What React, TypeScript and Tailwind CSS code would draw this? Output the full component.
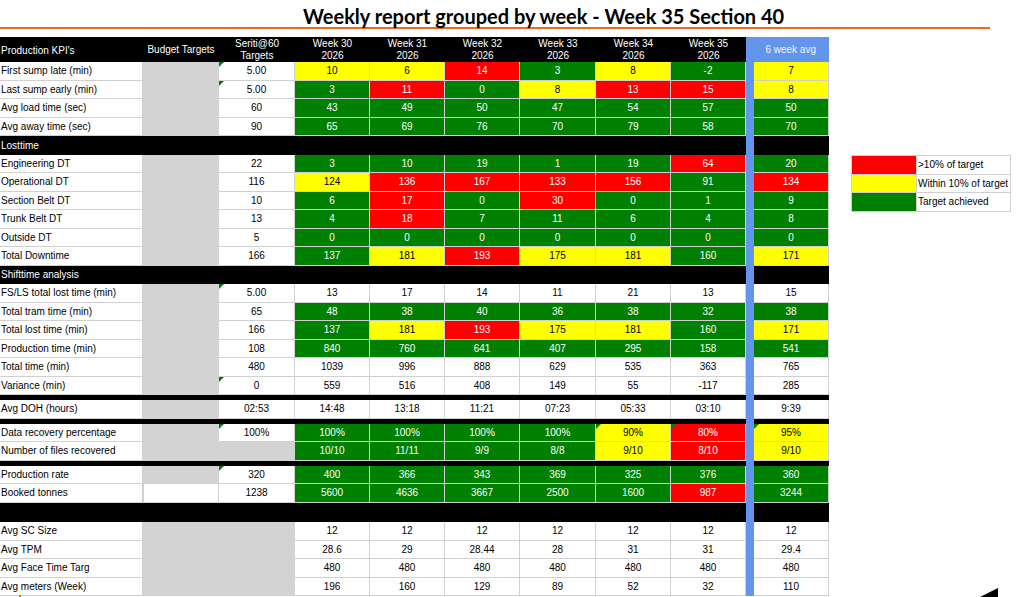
import React from 'react';

type Tone = 'g' | 'r' | 'y' | 'w';

type Row =
  | { kind: 'data'; label: string; target?: string; tri?: boolean; budget?: 'gray' | 'white' | 'span'; cells: string }
  | { kind: 'section'; label: string }
  | { kind: 'sep' }
  | { kind: 'band' };

const GRID = 'grid grid-cols-[143px_76px_76px_75px_75px_75px_76px_75px_75px_8px_75px]';
const FONT = "font-['Liberation_Sans',Arial,sans-serif]";
const LINE = 'border-r border-b border-[#d0d0d0]';

const TONES: Record<Tone, string> = {
  g: 'bg-[#008000] text-white',
  r: 'bg-[#ff0000] text-white',
  y: 'bg-[#ffff00] text-black',
  w: 'bg-white text-black',
};

const rows: Row[] = [
  { kind: 'data', label: 'First sump late (min)', target: '5.00', tri: true, cells: '10|y 6|y 14|r 3|g 8|y -2|g 7|y' },
  { kind: 'data', label: 'Last sump early (min)', target: '5.00', tri: true, cells: '3|g 11|r 0|g 8|y 13|r 15|r 8|y' },
  { kind: 'data', label: 'Avg load time (sec)', target: '60', cells: '43|g 49|g 50|g 47|g 54|g 57|g 50|g' },
  { kind: 'data', label: 'Avg away time (sec)', target: '90', cells: '65|g 69|g 76|g 70|g 79|g 58|g 70|g' },
  { kind: 'section', label: 'Losttime' },
  { kind: 'data', label: 'Engineering DT', target: '22', cells: '3|g 10|g 19|g 1|g 19|g 64|r 20|g' },
  { kind: 'data', label: 'Operational DT', target: '116', cells: '124|y 136|r 167|r 133|r 156|r 91|g 134|r' },
  { kind: 'data', label: 'Section Belt DT', target: '10', cells: '6|g 17|r 0|g 30|r 0|g 1|g 9|g' },
  { kind: 'data', label: 'Trunk Belt DT', target: '13', cells: '4|g 18|r 7|g 11|g 6|g 4|g 8|g' },
  { kind: 'data', label: 'Outside DT', target: '5', cells: '0|g 0|g 0|g 0|g 0|g 0|g 0|g' },
  { kind: 'data', label: 'Total Downtime', target: '166', cells: '137|g 181|y 193|r 175|y 181|y 160|g 171|y' },
  { kind: 'section', label: 'Shifttime analysis' },
  { kind: 'data', label: 'FS/LS total lost time (min)', target: '5.00', tri: true, cells: '13|w 17|w 14|w 11|w 21|w 13|w 15|w' },
  { kind: 'data', label: 'Total tram time (min)', target: '65', cells: '48|g 38|g 40|g 36|g 38|g 32|g 38|g' },
  { kind: 'data', label: 'Total lost time (min)', target: '166', cells: '137|g 181|y 193|r 175|y 181|y 160|g 171|y' },
  { kind: 'data', label: 'Production time (min)', target: '108', cells: '840|g 760|g 641|g 407|g 295|g 158|g 541|g' },
  { kind: 'data', label: 'Total time (min)', target: '480', cells: '1039|w 996|w 888|w 629|w 535|w 363|w 765|w' },
  { kind: 'data', label: 'Variance (min)', target: '0', tri: true, cells: '559|w 516|w 408|w 149|w 55|w -117|w 285|w' },
  { kind: 'sep' },
  { kind: 'data', label: 'Avg DOH (hours)', target: '02:53', cells: '14:48|w 13:18|w 11:21|w 07:23|w 05:33|w 03:10|w 9:39|w' },
  { kind: 'sep' },
  { kind: 'data', label: 'Data recovery percentage', target: '100%', tri: true, cells: '100%|g 100%|g 100%|g 100%|g 90%|y* 80%|r* 95%|y*' },
  { kind: 'data', label: 'Number of files recovered', budget: 'span', cells: '10/10|g 11/11|g 9/9|g 8/8|g 9/10|y 8/10|r 9/10|y' },
  { kind: 'sep' },
  { kind: 'data', label: 'Production rate', target: '320', tri: true, cells: '400|g 366|g 343|g 369|g 325|g 376|g 360|g' },
  { kind: 'data', label: 'Booked tonnes', target: '1238', budget: 'white', cells: '5600|g 4636|g 3667|g 2500|g 1600|g 987|r 3244|g' },
  { kind: 'band' },
  { kind: 'data', label: 'Avg SC Size', budget: 'span', cells: '12|w 12|w 12|w 12|w 12|w 12|w 12|w' },
  { kind: 'data', label: 'Avg TPM', budget: 'span', cells: '28.6|w 29|w 28.44|w 28|w 31|w 31|w 29.4|w' },
  { kind: 'data', label: 'Avg Face Time Targ', budget: 'span', cells: '480|w 480|w 480|w 480|w 480|w 480|w 480|w' },
  { kind: 'data', label: 'Avg meters (Week)', budget: 'span', cells: '196|w 160|w 129|w 89|w 52|w 32|w 110|w' },
];

// little green corner marker, like an Excel cell note
function Flag() {
  return (
    <span className="absolute left-0 top-0 h-0 w-0 border-r-[5px] border-t-[5px] border-r-transparent border-t-[#008000]" />
  );
}

function Cell({ spec }: { spec: string }) {
  const [value, rest] = spec.split('|');
  const tone = rest[0] as Tone;
  return (
    <div className={`relative flex items-center justify-center pt-px ${LINE} ${TONES[tone]}`}>
      {rest.includes('*') && <Flag />}
      {value}
    </div>
  );
}

function TableRow({ row }: { row: Row }) {
  if (row.kind === 'sep') {
    return (
      <div className={`${GRID} h-[5px]`}>
        <div className="col-span-9 bg-black" />
        <div className="bg-[#6495ed]" />
        <div className="bg-black" />
      </div>
    );
  }
  if (row.kind === 'band' || row.kind === 'section') {
    const tall = row.kind === 'band' ? 'h-[19.5px]' : 'h-[18.5px]';
    return (
      <div className={`${GRID} ${tall} text-white`}>
        <div className="col-span-9 flex items-center bg-black pl-px pt-px">{row.kind === 'section' ? row.label : ''}</div>
        <div className="bg-[#6495ed]" />
        <div className="bg-black" />
      </div>
    );
  }
  const cells = row.cells.split(' ');
  return (
    <div className={`${GRID} h-[18.5px]`}>
      <div className={`flex items-center bg-white pl-px pt-px ${LINE}`}>{row.label}</div>
      {row.budget === 'span' ? (
        <div className="col-span-2 bg-[#d3d3d3]" />
      ) : (
        <>
          {row.budget === 'white' ? <div className={`border-l bg-white ${LINE}`} /> : <div className="bg-[#d3d3d3]" />}
          <div className={`relative flex items-center justify-center bg-white pt-px ${LINE}`}>
            {row.tri && <Flag />}
            {row.target}
          </div>
        </>
      )}
      {cells.slice(0, 6).map((c, i) => (
        <Cell key={i} spec={c} />
      ))}
      <div className="bg-[#6495ed]" />
      <Cell spec={cells[6]} />
    </div>
  );
}

function Header() {
  const weeks = ['Week 30', 'Week 31', 'Week 32', 'Week 33', 'Week 34', 'Week 35'];
  return (
    <div className={`${GRID} h-[25px] text-white`}>
      <div className="flex items-center bg-black pl-px pt-[2px]">Production KPI's</div>
      <div className="flex items-center justify-center bg-black">Budget Targets</div>
      <div className="flex flex-col items-center justify-center bg-black leading-[12px]">
        <span>Seriti@60</span>
        <span>Targets</span>
      </div>
      {weeks.map(w => (
        <div key={w} className="flex flex-col items-center justify-center bg-black leading-[12px]">
          <span>{w}</span>
          <span>2026</span>
        </div>
      ))}
      <div className="col-span-2 flex items-center justify-end bg-[#6495ed] pr-[13px] text-[#f0f4ff]">6 week avg</div>
    </div>
  );
}

function Legend() {
  const items: [string, string][] = [
    ['bg-[#ff0000]', '>10% of target'],
    ['bg-[#ffff00]', 'Within 10% of target'],
    ['bg-[#008000]', 'Target achieved'],
  ];
  return (
    <div className="mt-[118px] ml-[23px] h-fit border-l border-t border-[#d0d0d0]">
      {items.map(([bg, text]) => (
        <div key={text} className="grid h-[18.5px] grid-cols-[65px_94px]">
          <div className={`${bg} ${LINE}`} />
          <div className={`flex items-center bg-white pl-px pt-px ${LINE}`}>{text}</div>
        </div>
      ))}
    </div>
  );
}

export default function App() {
  return (
    <div className={`relative h-[597px] w-[1016px] overflow-hidden bg-white text-[10px] leading-none text-black ${FONT}`}>
      <div className="flex h-[27px] items-end pb-[1px] pl-[303px]">
        <h1 className="font-['Lato',sans-serif] text-[20px] font-bold leading-none text-black">
          Weekly report grouped by week - Week 35 Section 40
        </h1>
      </div>
      <div className="h-[2px] w-[990px] bg-[#f26522]" />
      <div className="mt-[8px] flex">
        <div className="w-[828px]">
          <Header />
          {rows.map((r, i) => (
            <TableRow key={i} row={r} />
          ))}
        </div>
        <Legend />
      </div>
      <span className="absolute left-[19px] top-[595px] h-[2px] w-[2px] bg-[#f26522]" />
      <svg className="absolute left-[980px] top-[588px]" width="18" height="9" viewBox="0 0 18 9">
        <polygon points="0,9 18,0 18,9" fill="#000" />
      </svg>
    </div>
  );
}
